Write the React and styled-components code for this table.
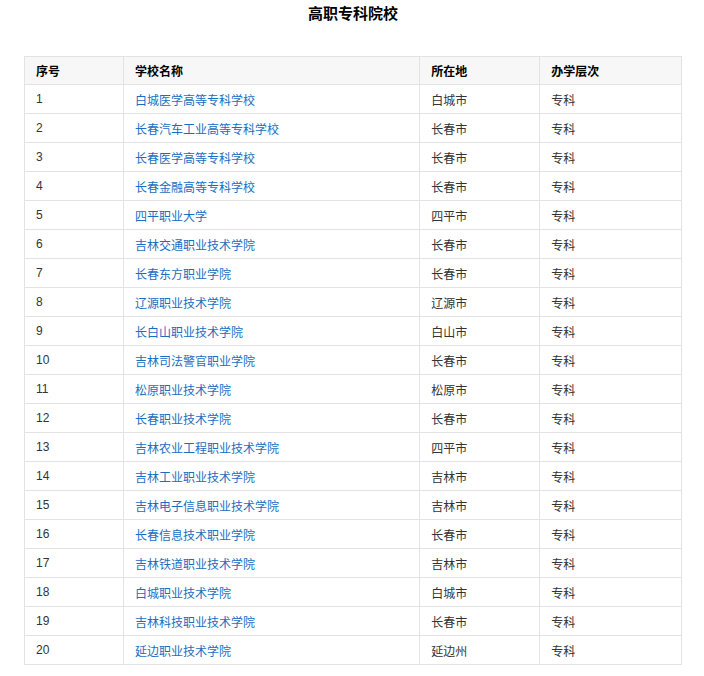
import React from "react";
import styled, { createGlobalStyle } from "styled-components";

const Global = createGlobalStyle`
  body {
    margin: 0;
    background: #fff;
    font-family: "Liberation Sans", Arial, "Noto Sans CJK SC", sans-serif;
    color: #333;
  }
`;

const Page = styled.div`
  padding: 0 22px 0 24px;
`;

const Title = styled.h2`
  margin: 0 0 28px;
  height: 28px;
  line-height: 28px;
  text-align: center;
  font-size: 15px;
  font-weight: bold;
  color: #000;
`;

const Table = styled.table`
  width: 658px;
  border-collapse: collapse;
  font-size: 12px;
`;

const Th = styled.th`
  height: 28px;
  padding: 0 11px;
  text-align: left;
  font-weight: bold;
  color: #000;
  background: #f7f7f7;
  border: 1px solid #e3e3e3;
  width: ${(p) => p.w}px;
  box-sizing: border-box;
`;

const Td = styled.td`
  height: 29px;
  padding: 0 11px;
  border: 1px solid #e3e3e3;
  color: #333;
  box-sizing: border-box;
`;

const Link = styled.a`
  color: #1a6ec2;
  text-decoration: none;
`;

const data = [
  ["白城医学高等专科学校", "白城市"],
  ["长春汽车工业高等专科学校", "长春市"],
  ["长春医学高等专科学校", "长春市"],
  ["长春金融高等专科学校", "长春市"],
  ["四平职业大学", "四平市"],
  ["吉林交通职业技术学院", "长春市"],
  ["长春东方职业学院", "长春市"],
  ["辽源职业技术学院", "辽源市"],
  ["长白山职业技术学院", "白山市"],
  ["吉林司法警官职业学院", "长春市"],
  ["松原职业技术学院", "松原市"],
  ["长春职业技术学院", "长春市"],
  ["吉林农业工程职业技术学院", "四平市"],
  ["吉林工业职业技术学院", "吉林市"],
  ["吉林电子信息职业技术学院", "吉林市"],
  ["长春信息技术职业学院", "长春市"],
  ["吉林铁道职业技术学院", "吉林市"],
  ["白城职业技术学院", "白城市"],
  ["吉林科技职业技术学院", "长春市"],
  ["延边职业技术学院", "延边州"],
];

export default function App() {
  return (
    <Page>
      <Global />
      <Title>高职专科院校</Title>
      <Table>
        <thead>
          <tr>
            <Th w={99}>序号</Th>
            <Th w={297}>学校名称</Th>
            <Th w={120}>所在地</Th>
            <Th w={142}>办学层次</Th>
          </tr>
        </thead>
        <tbody>
          {data.map((row, i) => (
            <tr key={i}>
              <Td>{i + 1}</Td>
              <Td>
                <Link href="#">{row[0]}</Link>
              </Td>
              <Td>{row[1]}</Td>
              <Td>专科</Td>
            </tr>
          ))}
        </tbody>
      </Table>
    </Page>
  );
}
